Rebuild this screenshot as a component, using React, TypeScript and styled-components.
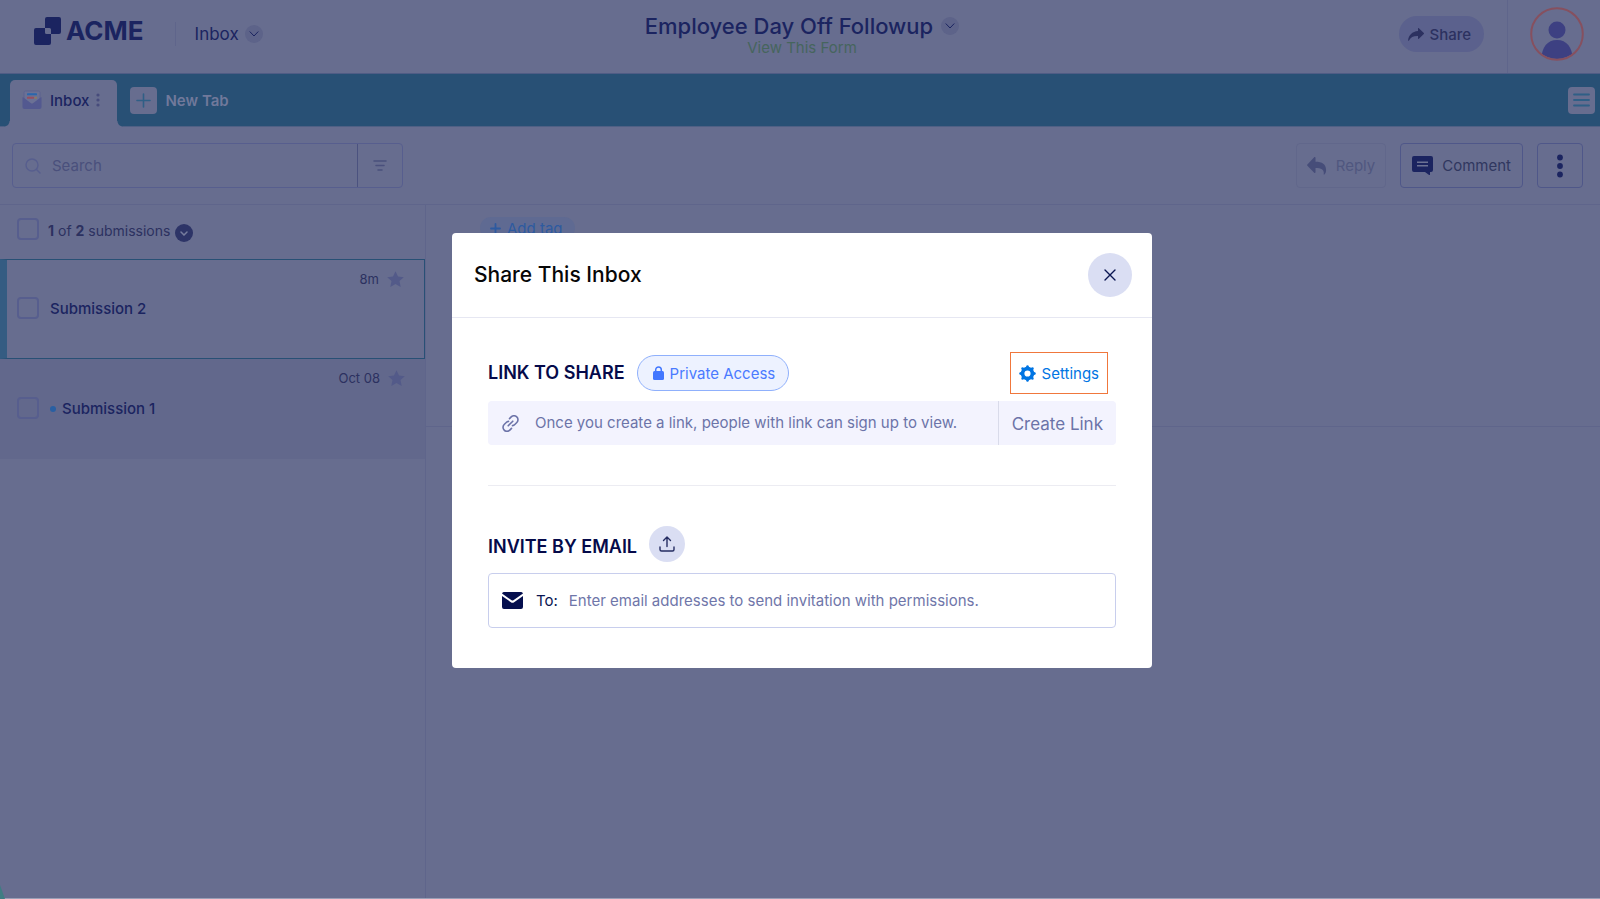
import React from "react";
import styled, { createGlobalStyle } from "styled-components";

const c = {
  page: "#676d8f",
  line: "#5f658b",
  ink: "#1b2460",
  text: "#2c3160",
  muted: "#4a507c",
  bar: "#285075",
  barLight: "#355c82",
  field: "#575e8e",
  chip: "#5d6389",
};

const GlobalStyle = createGlobalStyle`
  *, *::before, *::after { box-sizing: border-box; }
  body { margin: 0; background: ${c.page}; }
  body, button, input { font-family: Inter, "Liberation Sans", sans-serif; }
  h1, h2, h3, p { margin: 0; }
  button { padding: 0; border: 0; background: none; color: inherit; cursor: pointer; }
  a { text-decoration: none; color: inherit; }
  svg { display: block; flex: none; }
`;

const Page = styled.div`
  display: flex;
  flex-direction: column;
  min-height: 100vh;
  background: ${c.page};
  border-bottom: 1px solid #9a9fb6;
  color: ${c.ink};
  font-size: 15px;
  line-height: 20px;
`;

const Header = styled.header`
  display: grid;
  grid-template-columns: 1fr auto 1fr;
  height: 74px;
  border-bottom: 1px solid #4f5c85;
`;

const Brand = styled.div`
  display: flex;
  align-items: center;
  padding: 0 0 11px 34px;
`;

const Logo = styled.a`
  display: flex;
  align-items: center;
  gap: 4px;
  padding-right: 31px;
  font-size: 26px;
  line-height: 32px;
  font-weight: 700;
  color: ${c.ink};
`;

const BrandMenu = styled.button`
  display: flex;
  align-items: center;
  gap: 6px;
  margin-top: 6px;
  padding-left: 19px;
  height: 24px;
  border-left: 1px solid ${c.line};
  font-size: 17px;
`;

const Round = styled.span<{ $size: number; $bg: string }>`
  display: inline-flex;
  align-items: center;
  justify-content: center;
  flex: none;
  width: ${(p) => p.$size}px;
  height: ${(p) => p.$size}px;
  border-radius: 50%;
  background: ${(p) => p.$bg};
`;

const FormTitle = styled.div`
  display: flex;
  flex-direction: column;
  align-items: center;
  padding: 12px 0 0 4px;
`;

const TitleButton = styled.button`
  display: flex;
  align-items: center;
  gap: 8px;
  color: ${c.ink};

  h1 {
    font-size: 22px;
    line-height: 28px;
    font-weight: 500;
  }
`;

const ViewLink = styled.a`
  font-size: 15px;
  line-height: 16px;
  color: #46655d;
`;

const Account = styled.div`
  display: flex;
  justify-content: flex-end;
  align-items: center;
`;

const ShareButton = styled.button`
  display: flex;
  align-items: center;
  gap: 5px;
  height: 36px;
  margin: 0 23px 5px 0;
  padding: 0 13px 0 9px;
  border-radius: 18px;
  background: #5b618d;
  color: ${c.text};
  font-size: 15px;
  font-weight: 500;
`;

const AvatarCell = styled.div`
  display: flex;
  align-self: stretch;
  padding: 7px 16px 0 22px;
  border-left: 1px solid ${c.line};
`;

const TabBar = styled.nav`
  display: flex;
  align-items: center;
  height: 53px;
  padding: 0 5px 0 10px;
  background: ${c.bar};
  border-bottom: 1px solid #4f6085;
`;

const Tab = styled.button`
  position: relative;
  display: flex;
  align-items: center;
  align-self: flex-end;
  height: 47px;
  margin-bottom: -1px;
  padding: 0 17px 7px 12px;
  border-radius: 5px 5px 0 0;
  background: ${c.page};
  color: ${c.ink};
  font-size: 15px;
  font-weight: 500;

  span {
    padding: 0 7px 0 8px;
  }

  &::before,
  &::after {
    content: "";
    position: absolute;
    bottom: 0;
    width: 6px;
    height: 6px;
  }
  &::before {
    right: 100%;
    background: radial-gradient(circle at 0 0, ${c.bar} 5px, ${c.page} 6px);
  }
  &::after {
    left: 100%;
    background: radial-gradient(circle at 100% 0, ${c.bar} 5px, ${c.page} 6px);
  }
`;

const NewTab = styled.button`
  display: flex;
  align-items: center;
  gap: 8px;
  margin-left: 13px;
  color: #71799b;
  font-size: 15px;
  font-weight: 600;
`;

const Tile = styled.span`
  display: flex;
  align-items: center;
  justify-content: center;
  width: 27px;
  height: 27px;
  border-radius: 4px;
  background: ${c.page};
`;

const MenuButton = styled.button`
  margin-left: auto;
`;

const Toolbar = styled.div`
  display: flex;
  align-items: center;
  gap: 14px;
  height: 78px;
  padding: 0 17px 0 12px;
  border-bottom: 1px solid ${c.line};
`;

const SearchBox = styled.form`
  display: flex;
  width: 391px;
  height: 45px;
  margin-right: auto;
  border: 1px solid ${c.field};
  border-radius: 4px;

  label {
    display: flex;
    align-items: center;
    gap: 11px;
    flex: 1;
    min-width: 0;
    padding-left: 12px;
  }

  input {
    flex: 1;
    min-width: 0;
    padding: 0;
    border: 0;
    outline: 0;
    background: none;
    color: ${c.text};
    font-size: 15px;
  }
  input::placeholder {
    color: ${c.muted};
    opacity: 1;
  }

  button {
    display: flex;
    align-items: center;
    justify-content: center;
    width: 45px;
    border-left: 1px solid #4b527f;
  }
`;

const ActionButton = styled.button<{ $faded?: boolean }>`
  display: flex;
  align-items: center;
  justify-content: center;
  gap: 9px;
  height: 45px;
  padding: 0 ${(p) => (p.$faded ? 10 : 11)}px;
  border: 1px solid ${(p) => (p.$faded ? "#61678b" : "#4f5789")};
  border-radius: 4px;
  color: ${(p) => (p.$faded ? "#50577f" : "#30375f")};
  font-size: 15px;
`;

const MoreButton = styled(ActionButton)`
  width: 46px;
`;

const Body = styled.div`
  display: flex;
  flex: 1;
`;

const Sidebar = styled.aside`
  width: 426px;
  flex: none;
  border-right: 1px solid ${c.line};
`;

const ListHead = styled.div`
  display: flex;
  align-items: center;
  gap: 9px;
  height: 54px;
  padding: 0 0 6px 17px;
  color: ${c.text};
  font-size: 14px;

  label {
    padding-top: 4px;
  }
  button {
    display: flex;
    margin: 8px 0 0 -4px;
  }
`;

const Check = styled.input.attrs({ type: "checkbox" })`
  appearance: none;
  flex: none;
  width: 22px;
  height: 22px;
  margin: 0;
  border: 2px solid ${c.field};
  border-radius: 4px;
`;

const List = styled.ul`
  margin: 0;
  padding: 0;
  list-style: none;
`;

const Row = styled.li<{ $active?: boolean }>`
  display: grid;
  grid-template-columns: auto 1fr auto;
  align-items: center;
  height: 100px;
  padding: 0 ${(p) => (p.$active ? 20 : 20)}px 2px ${(p) => (p.$active ? 10 : 17)}px;
  border: 0 solid ${c.bar};
  border-width: ${(p) => (p.$active ? "1px 1px 1px 0" : "0")};
  background: ${(p) => (p.$active ? "#676d8f" : "#62688c")};
  ${(p) => p.$active && `border-left: 7px solid ${c.barLight};`}

  label {
    display: flex;
    align-items: center;
    gap: 6px;
    padding: 2px 0 0 11px;
    font-size: 15px;
    font-weight: 500;
  }
`;

const UnreadDot = styled.span`
  width: 6px;
  height: 6px;
  border-radius: 50%;
  background: #295fa2;
`;

const RowMeta = styled.span`
  display: flex;
  align-items: center;
  gap: 8px;
  align-self: start;
  padding-top: 9px;
  color: ${c.text};
  font-size: 13px;
`;

const Detail = styled.main`
  flex: 1;
`;

const TagRow = styled.div`
  height: 222px;
  padding: 12px 0 0 54px;
  border-bottom: 1px solid ${c.line};
`;

const TagButton = styled.button`
  display: flex;
  align-items: center;
  gap: 6px;
  height: 22px;
  padding: 0 12px 0 10px;
  border-radius: 11px;
  background: #5f6a92;
  color: #2d5aa0;
  font-size: 15px;
`;

const HelpBubble = styled.div`
  position: absolute;
  left: 0;
  bottom: 0;
  width: 5px;
  height: 14px;
  background: #3f7d83;
  clip-path: polygon(0 0, 100% 100%, 0 100%);
`;

const Overlay = styled.div`
  position: fixed;
  inset: 0;
  display: flex;
  align-items: center;
  justify-content: center;
  padding: 2px 0 0 4px;
`;

const Dialog = styled.section`
  width: 700px;
  max-width: 100%;
  border-radius: 4px;
  background: #fff;
  color: #0a1551;
  font-size: 15px;
  line-height: 20px;
`;

const DialogHead = styled.div`
  display: flex;
  align-items: center;
  justify-content: space-between;
  height: 85px;
  padding: 0 20px 0 22px;
  border-bottom: 1px solid #e6e7f2;

  h2 {
    color: #070707;
    font-size: 21px;
    line-height: 28px;
    font-weight: 500;
  }
`;

const DialogBody = styled.div`
  padding: 34px 36px 40px;
`;

const SectionHead = styled.div`
  display: flex;
  align-items: center;
  gap: 12px;

  h3 {
    color: #050a4a;
    font-size: 18px;
    line-height: 24px;
    font-weight: 600;
  }
`;

const InviteHead = styled(SectionHead)`
  padding-bottom: 11px;

  h3 {
    padding-top: 5px;
  }
`;

const AccessBadge = styled.button`
  display: flex;
  align-items: center;
  gap: 6px;
  height: 36px;
  padding: 0 13px 0 15px;
  border: 1px solid #8fb0fc;
  border-radius: 18px;
  background: #edf2ff;
  color: #4a7aff;
  font-size: 15px;
`;

const SettingsButton = styled.button`
  display: flex;
  align-items: center;
  gap: 6px;
  height: 42px;
  margin: 0 8px 0 auto;
  padding: 0 8px;
  border: 1px solid #f0773c;
  color: #0075e3;
  font-size: 15px;
`;

const LinkBar = styled.div`
  display: flex;
  align-items: stretch;
  height: 44px;
  margin-top: 7px;
  border-radius: 4px;
  background: #f3f3fe;
  color: #6c73a8;

  p {
    display: flex;
    align-items: center;
    gap: 16px;
    flex: 1;
    padding-left: 14px;
  }
  button {
    padding: 2px 13px 0;
    border-left: 1px solid #d9dbea;
    font-size: 17px;
  }
`;

const Divider = styled.hr`
  margin: 40px 0;
  border: 0;
  border-top: 1px solid #ececf2;
`;

const EmailField = styled.label`
  display: flex;
  align-items: center;
  height: 55px;
  padding: 0 13px;
  border: 1px solid #c8ceed;
  border-radius: 4px;

  span {
    padding: 0 11px 0 13px;
  }
  input {
    flex: 1;
    min-width: 0;
    padding: 0;
    border: 0;
    outline: 0;
    font-size: 15px;
  }
  input::placeholder {
    color: #6f76a9;
    opacity: 1;
  }
`;

const Chevron = ({ color = c.ink, width = 1 }: { color?: string; width?: number }) => (
  <svg width="10" height="6" viewBox="0 0 10 6" fill="none" stroke={color} strokeWidth={width} strokeLinecap="round" strokeLinejoin="round">
    <path d="M1 .8 5 5 9 .8" />
  </svg>
);

const Star = () => (
  <svg width="17" height="17" viewBox="0 0 17 17" fill="#535a89">
    <path d="M8.500.3 11 5.600l5.800.6-4.300 3.900 1.200 5.900-5.200-3-5.200 3 1.200-5.900L.2 6.200 6 5.600Z" />
  </svg>
);

const gearTeeth = Array.from({ length: 8 }, (_, i) => i * 45);

export default function App() {
  return (
    <>
      <GlobalStyle />
      <Page>
        <Header>
          <Brand>
            <Logo href="#home">
              <svg width="28" height="28" viewBox="0 0 28 28" fill={c.ink}>
                <path d="M13 0h12a2 2 0 0 1 2 2v13a2 2 0 0 1-2 2h-8v-4.500a1.500 1.500 0 0 0-1.500-1.500H11V2a2 2 0 0 1 2-2Z" />
                <path d="M2 11h9v4.500a1.500 1.500 0 0 0 1.500 1.500H17v9a2 2 0 0 1-2 2H2a2 2 0 0 1-2-2V13a2 2 0 0 1 2-2Z" />
              </svg>
              ACME
            </Logo>
            <BrandMenu>
              Inbox
              <Round $size={18} $bg={c.chip}>
                <Chevron />
              </Round>
            </BrandMenu>
          </Brand>
          <FormTitle>
            <TitleButton>
              <h1>Employee Day Off Followup</h1>
              <Round $size={18} $bg={c.chip}>
                <Chevron />
              </Round>
            </TitleButton>
            <ViewLink href="#form">View This Form</ViewLink>
          </FormTitle>
          <Account>
            <ShareButton>
              <svg width="16" height="13" viewBox="0 0 16 13" fill={c.text}>
                <path d="M10 .5c0-.5.5-.7.9-.3l4.900 4.900c.3.3.3.700 0 1L10.900 10.700c-.4.4-.9.200-.9-.3V8.100C5.500 7.900 2.700 9.300 1 12.500c-.3.600-1 .400-.9-.3C.6 7.200 4.200 3.300 10 2.900V.5Z" />
              </svg>
              Share
            </ShareButton>
            <AvatarCell>
              <a href="#account" aria-label="Account">
                <svg width="54" height="54" viewBox="0 0 54 54">
                  <clipPath id="avatar-clip">
                    <circle cx="27" cy="27" r="25" />
                  </clipPath>
                  <g fill="#3d4082" clipPath="url(#avatar-clip)">
                    <circle cx="27" cy="23" r="8.500" />
                    <path d="M11 56c0-14 5-23 16-23S43 42 43 56Z" />
                  </g>
                  <circle cx="27" cy="27" r="25.800" fill="none" stroke="#86505f" strokeWidth="2" />
                </svg>
              </a>
            </AvatarCell>
          </Account>
        </Header>

        <TabBar>
          <Tab>
            <svg width="20" height="20" viewBox="0 0 20 20">
              <path d="M2 2.500A1.500 1.500 0 0 1 3.500 1h13A1.500 1.500 0 0 1 18 2.500V14H2Z" fill="#6b7195" stroke="#5a6191" strokeWidth=".8" />
              <rect x="5" y="3.300" width="10" height="2" rx=".6" fill="#2a66ad" />
              <rect x="5" y="6.800" width="7" height="2" rx=".6" fill="#964e60" />
              <rect x="12.500" y="6.800" width="2.500" height="2" rx=".6" fill="#8d7a62" />
              <path d="M.5 7.500c0-.3.300-.4.600-.2L10 14l8.900-6.700c.3-.2.600-.1.600.2V17a2 2 0 0 1-2 2h-15a2 2 0 0 1-2-2Z" fill="#535990" />
            </svg>
            <span>Inbox</span>
            <svg width="4" height="14" viewBox="0 0 4 14" fill="#474c7c">
              <circle cx="2" cy="2" r="1.600" />
              <circle cx="2" cy="7" r="1.600" />
              <circle cx="2" cy="12" r="1.600" />
            </svg>
          </Tab>
          <NewTab>
            <Tile>
              <svg width="15" height="15" viewBox="0 0 15 15" stroke="#2f5f86" strokeWidth="1.600" strokeLinecap="round">
                <path d="M7.500 1v13M1 7.500h13" />
              </svg>
            </Tile>
            New Tab
          </NewTab>
          <MenuButton aria-label="Menu">
            <Tile>
              <svg width="17" height="14" viewBox="0 0 17 14" stroke="#2f5f86" strokeWidth="1.800" strokeLinecap="round">
                <path d="M1 1.500h15M1 7h15M1 12.500h15" />
              </svg>
            </Tile>
          </MenuButton>
        </TabBar>

        <Toolbar>
          <SearchBox>
            <label>
              <svg width="16" height="16" viewBox="0 0 16 16" fill="none" stroke={c.field} strokeWidth="1.400" strokeLinecap="round">
                <circle cx="7" cy="7" r="6" />
                <path d="m11.500 11.500 3.500 3.500" />
              </svg>
              <input type="search" placeholder="Search" aria-label="Search" />
            </label>
            <button type="button" aria-label="Filter">
              <svg width="14" height="11" viewBox="0 0 14 11" stroke={c.muted} strokeWidth="1.500" strokeLinecap="round">
                <path d="M1 1h12M3 5.500h8M5 10h4" />
              </svg>
            </button>
          </SearchBox>
          <ActionButton $faded>
            <svg width="20" height="18" viewBox="0 0 20 18" fill="#464d79">
              <path d="M8.500.8v4c7 0 11 2.700 10.500 9.200-.1 1.500-.7 2.700-1.600 3.600-.3.300-.8.100-.7-.4.600-4-1.500-6.200-8.200-6.200v4.200c0 .7-.8 1-1.300.6L.4 8.800a1 1 0 0 1 0-1.400L7.200.2c.5-.5 1.300-.1 1.300.6Z" />
            </svg>
            Reply
          </ActionButton>
          <ActionButton>
            <svg width="21" height="19" viewBox="0 0 21 19">
              <path d="M2 0h17a2 2 0 0 1 2 2v12a2 2 0 0 1-2 2h-1v2.500c0 .5-.5.700-.9.400L13 16H2a2 2 0 0 1-2-2V2a2 2 0 0 1 2-2Z" fill={c.ink} />
              <path d="M5 6.200h11M5 9.800h11" stroke="#6c7294" strokeWidth="1.400" />
            </svg>
            Comment
          </ActionButton>
          <MoreButton aria-label="More actions">
            <svg width="6" height="24" viewBox="0 0 6 24" fill={c.ink}>
              <circle cx="3" cy="3.500" r="2.900" />
              <circle cx="3" cy="12" r="2.900" />
              <circle cx="3" cy="20.500" r="2.900" />
            </svg>
          </MoreButton>
        </Toolbar>

        <Body>
          <Sidebar>
            <ListHead>
              <Check id="select-all" />
              <label htmlFor="select-all">
                <b>1</b> of <b>2</b> submissions
              </label>
              <button aria-label="Selection options">
                <Round $size={18} $bg="#2d3467">
                  <svg width="8" height="5" viewBox="0 0 8 5" fill="none" stroke="#767c9d" strokeWidth="1.500" strokeLinecap="round">
                    <path d="m1 1 3 3 3-3" />
                  </svg>
                </Round>
              </button>
            </ListHead>
            <List>
              <Row $active>
                <Check id="submission-2" />
                <label htmlFor="submission-2">Submission 2</label>
                <RowMeta>
                  8m
                  <Star />
                </RowMeta>
              </Row>
              <Row>
                <Check id="submission-1" />
                <label htmlFor="submission-1">
                  <UnreadDot />
                  Submission 1
                </label>
                <RowMeta>
                  Oct 08
                  <Star />
                </RowMeta>
              </Row>
            </List>
          </Sidebar>
          <Detail>
            <TagRow>
              <TagButton>
                <svg width="11" height="11" viewBox="0 0 11 11" stroke="#2d5aa0" strokeWidth="1.800" strokeLinecap="round">
                  <path d="M5.500 1v9M1 5.500h9" />
                </svg>
                Add tag
              </TagButton>
            </TagRow>
          </Detail>
        </Body>
      </Page>

      <Overlay>
        <HelpBubble />
        <Dialog role="dialog" aria-modal="true" aria-labelledby="share-title">
          <DialogHead>
            <h2 id="share-title">Share This Inbox</h2>
            <button aria-label="Close">
              <Round $size={44} $bg="#dadef3">
                <svg width="12" height="12" viewBox="0 0 12 12" stroke="#0a1551" strokeWidth="1.400" strokeLinecap="round">
                  <path d="m1 1 10 10M11 1 1 11" />
                </svg>
              </Round>
            </button>
          </DialogHead>
          <DialogBody>
            <SectionHead>
              <h3>LINK TO SHARE</h3>
              <AccessBadge>
                <svg width="11" height="14" viewBox="0 0 11 14">
                  <path d="M2.700 6V3.700a2.800 2.800 0 0 1 5.600 0V6" fill="none" stroke="#4277ff" strokeWidth="1.500" />
                  <rect y="5" width="11" height="9" rx="1.500" fill="#4277ff" />
                </svg>
                Private Access
              </AccessBadge>
              <SettingsButton>
                <svg width="17" height="17" viewBox="0 0 17 17" fill="#0075e3">
                  {gearTeeth.map((angle) => (
                    <path key={angle} d="M6.400 3 7.600.6Q8.500-.2 9.400.6L10.600 3Z" transform={`rotate(${angle} 8.500 8.500)`} />
                  ))}
                  <circle cx="8.500" cy="8.500" r="4.900" fill="none" stroke="#0075e3" strokeWidth="3.600" />
                </svg>
                Settings
              </SettingsButton>
            </SectionHead>
            <LinkBar>
              <p>
                <svg width="17" height="17" viewBox="0 0 17 17" fill="none" stroke="#6c73a8" strokeWidth="1.600" strokeLinecap="round" strokeLinejoin="round">
                  <path d="m7.500 3.600 1.700-1.700a3.900 3.900 0 0 1 5.600 0 3.900 3.900 0 0 1 0 5.600l-2 2a3.500 3.500 0 0 1-2.300 1.100" />
                  <path d="m9.500 13.400-1.700 1.700a3.900 3.900 0 0 1-5.600 0 3.900 3.900 0 0 1 0-5.600l2-2a3.500 3.500 0 0 1 2.300-1.100" />
                  <path d="m6.200 10.800 4.600-4.600" />
                </svg>
                Once you create a link, people with link can sign up to view.
              </p>
              <button>Create Link</button>
            </LinkBar>
            <Divider />
            <InviteHead>
              <h3>INVITE BY EMAIL</h3>
              <button aria-label="Upload address list">
                <Round $size={36} $bg="#dadef3">
                  <svg width="16" height="16" viewBox="0 0 16 16" fill="none" stroke="#252d62" strokeWidth="1.400" strokeLinecap="round" strokeLinejoin="round">
                    <path d="M8 10.500V1.200M4.500 4.500 8 1l3.500 3.500M1 11v2.500A1.500 1.500 0 0 0 2.500 15h11a1.500 1.500 0 0 0 1.500-1.500V11" />
                  </svg>
                </Round>
              </button>
            </InviteHead>
            <EmailField>
              <svg width="21" height="17" viewBox="0 0 21 17" fill="#050f4e">
                <path d="M2 0h17a2 2 0 0 1 2 1.500l-9.600 6.800a1.600 1.600 0 0 1-1.800 0L0 1.500A2 2 0 0 1 2 0Z" />
                <path d="m0 4 8.900 6.200c1 .7 2.200.7 3.200 0L21 4v11a2 2 0 0 1-2 2H2a2 2 0 0 1-2-2Z" />
              </svg>
              <span>To:</span>
              <input type="email" placeholder="Enter email addresses to send invitation with permissions." />
            </EmailField>
          </DialogBody>
        </Dialog>
      </Overlay>
    </>
  );
}
